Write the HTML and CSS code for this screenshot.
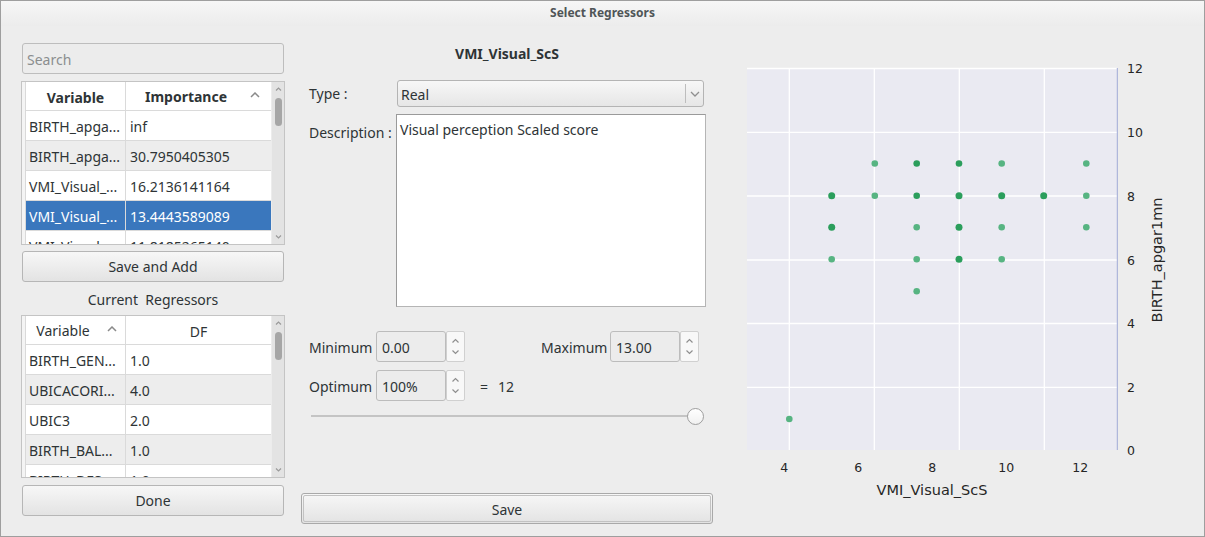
FILE: index.html
```html
<!DOCTYPE html>
<html>
<head>
<meta charset="utf-8">
<link rel="stylesheet" href="styles.css">
</head>
<body>
<div class="window">
  <div class="titlebar">Select Regressors</div>
  <div class="content">
    <div class="left">
      <div class="search">Search</div>
      <div class="tv tv1">
        <div class="vh"></div>
        <div class="grid">
          <div class="row hdr">
            <div class="c1 bold center">Variable</div>
            <div class="c2 hc2">
              <span class="bold htext">Importance</span>
              <svg class="caret" width="10" height="6" viewBox="0 0 10 6"><path d="M1 5 L5 1 L9 5" fill="none" stroke="#8a8a8a" stroke-width="1.5"/></svg>
            </div>
          </div>
          <div class="row"><div class="c1">BIRTH_apga...</div><div class="c2">inf</div></div>
          <div class="row alt"><div class="c1">BIRTH_apga...</div><div class="c2">30.7950405305</div></div>
          <div class="row"><div class="c1">VMI_Visual_...</div><div class="c2">16.2136141164</div></div>
          <div class="row sel"><div class="c1">VMI_Visual_...</div><div class="c2">13.4443589089</div></div>
          <div class="row"><div class="c1">VMI_Visual_...</div><div class="c2">11.8185265140</div></div>
        </div>
        <div class="sb">
          <svg width="9" height="6" viewBox="0 0 9 6"><path d="M2 4.5 L4.5 2 L7 4.5" fill="none" stroke="#9a9a9a" stroke-width="1.2"/></svg>
          <div class="thumb"></div>
          <div class="sb-fill"></div>
          <svg width="9" height="6" viewBox="0 0 9 6"><path d="M2 1.5 L4.5 4 L7 1.5" fill="none" stroke="#9a9a9a" stroke-width="1.2"/></svg>
        </div>
      </div>
      <div class="btn btn-add">Save and Add</div>
      <div class="cap">Current&nbsp; Regressors</div>
      <div class="tv tv2">
        <div class="vh"></div>
        <div class="grid">
          <div class="row hdr">
            <div class="c1 hc1">
              <span>Variable</span>
              <svg class="caret2" width="10" height="6" viewBox="0 0 10 6"><path d="M1 5 L5 1 L9 5" fill="none" stroke="#8a8a8a" stroke-width="1.5"/></svg>
            </div>
            <div class="c2 center">DF</div>
          </div>
          <div class="row"><div class="c1">BIRTH_GEN...</div><div class="c2">1.0</div></div>
          <div class="row alt"><div class="c1">UBICACORI...</div><div class="c2">4.0</div></div>
          <div class="row"><div class="c1">UBIC3</div><div class="c2">2.0</div></div>
          <div class="row alt"><div class="c1">BIRTH_BAL...</div><div class="c2">1.0</div></div>
          <div class="row"><div class="c1">BIRTH_DES...</div><div class="c2">1.0</div></div>
        </div>
        <div class="sb">
          <svg width="9" height="6" viewBox="0 0 9 6"><path d="M2 4.5 L4.5 2 L7 4.5" fill="none" stroke="#9a9a9a" stroke-width="1.2"/></svg>
          <div class="thumb"></div>
          <div class="sb-fill"></div>
          <svg width="9" height="6" viewBox="0 0 9 6"><path d="M2 1.5 L4.5 4 L7 1.5" fill="none" stroke="#9a9a9a" stroke-width="1.2"/></svg>
        </div>
      </div>
      <div class="btn btn-done">Done</div>
    </div>

    <div class="mid">
      <div class="vtitle">VMI_Visual_ScS</div>
      <div class="frow type-row">
        <div class="flabel">Type :</div>
        <div class="combo">
          <span class="combo-text">Real</span>
          <div class="combo-arrow">
            <svg width="10" height="6" viewBox="0 0 10 6"><path d="M1 1 L5 5 L9 1" fill="none" stroke="#8f8f8f" stroke-width="1.3"/></svg>
          </div>
        </div>
      </div>
      <div class="frow desc-row">
        <div class="flabel dlabel">Description :</div>
        <div class="textarea">Visual perception Scaled score</div>
      </div>
      <div class="frow mm-row">
        <div class="slabel">Minimum</div>
        <div class="spin">
          <div class="spin-field">0.00</div>
          <div class="spin-btns">
            <svg width="9" height="6" viewBox="0 0 9 6"><path d="M1.5 4.5 L4.5 1.5 L7.5 4.5" fill="none" stroke="#8f8f8f" stroke-width="1.2"/></svg>
            <svg width="9" height="6" viewBox="0 0 9 6"><path d="M1.5 1.5 L4.5 4.5 L7.5 1.5" fill="none" stroke="#8f8f8f" stroke-width="1.2"/></svg>
          </div>
        </div>
        <div class="slabel maxlabel">Maximum</div>
        <div class="spin">
          <div class="spin-field">13.00</div>
          <div class="spin-btns">
            <svg width="9" height="6" viewBox="0 0 9 6"><path d="M1.5 4.5 L4.5 1.5 L7.5 4.5" fill="none" stroke="#8f8f8f" stroke-width="1.2"/></svg>
            <svg width="9" height="6" viewBox="0 0 9 6"><path d="M1.5 1.5 L4.5 4.5 L7.5 1.5" fill="none" stroke="#8f8f8f" stroke-width="1.2"/></svg>
          </div>
        </div>
      </div>
      <div class="frow opt-row">
        <div class="slabel">Optimum</div>
        <div class="spin">
          <div class="spin-field">100%</div>
          <div class="spin-btns">
            <svg width="9" height="6" viewBox="0 0 9 6"><path d="M1.5 4.5 L4.5 1.5 L7.5 4.5" fill="none" stroke="#8f8f8f" stroke-width="1.2"/></svg>
            <svg width="9" height="6" viewBox="0 0 9 6"><path d="M1.5 1.5 L4.5 4.5 L7.5 1.5" fill="none" stroke="#8f8f8f" stroke-width="1.2"/></svg>
          </div>
        </div>
        <div class="eq">=</div>
        <div class="eqv">12</div>
      </div>
      <div class="slider">
        <div class="track"></div>
        <div class="handle"></div>
      </div>
      <div class="btn btn-save"><div class="btn-inner">Save</div></div>
    </div>

    <svg class="plot" width="474" height="487" viewBox="730 43 474 487">
      <rect x="747" y="68" width="370" height="382" fill="#eaeaf2"/>
      <g stroke="#ffffff" stroke-width="1.3">
        <line x1="747" y1="68.5" x2="1117" y2="68.5"/>
        <line x1="747" y1="132.3" x2="1117" y2="132.3"/>
        <line x1="747" y1="196" x2="1117" y2="196"/>
        <line x1="747" y1="260" x2="1117" y2="260"/>
        <line x1="747" y1="323.5" x2="1117" y2="323.5"/>
        <line x1="747" y1="387.3" x2="1117" y2="387.3"/>
        <line x1="789.3" y1="68" x2="789.3" y2="450"/>
        <line x1="874.3" y1="68" x2="874.3" y2="450"/>
        <line x1="959.3" y1="68" x2="959.3" y2="450"/>
        <line x1="1044.3" y1="68" x2="1044.3" y2="450"/>
      </g>
      <line x1="1117.3" y1="68" x2="1117.3" y2="450" stroke="#9fa9d6" stroke-width="1"/>
      <g fill="#57b482">
        <circle cx="874.8" cy="163.5" r="3.3"/>
        <circle cx="1001.7" cy="163.5" r="3.3"/>
        <circle cx="1086.3" cy="163.5" r="3.3"/>
        <circle cx="874.8" cy="195.7" r="3.3"/>
        <circle cx="1086.3" cy="195.7" r="3.3"/>
        <circle cx="916.7" cy="227.3" r="3.3"/>
        <circle cx="1001.7" cy="227.3" r="3.3"/>
        <circle cx="1086.3" cy="227.3" r="3.3"/>
        <circle cx="831.7" cy="259.3" r="3.3"/>
        <circle cx="916.7" cy="259.3" r="3.3"/>
        <circle cx="1001.7" cy="259.3" r="3.3"/>
        <circle cx="916.7" cy="291.3" r="3.3"/>
        <circle cx="789.3" cy="419" r="3.3"/>
      </g>
      <g fill="#2b9e5c">
        <circle cx="916.7" cy="163.5" r="3.3"/>
        <circle cx="959" cy="163.5" r="3.3"/>
        <circle cx="831.7" cy="195.7" r="3.5"/>
        <circle cx="916.7" cy="195.7" r="3.3"/>
        <circle cx="959" cy="195.7" r="3.5"/>
        <circle cx="1001.7" cy="195.7" r="3.5"/>
        <circle cx="1043.7" cy="195.7" r="3.5"/>
        <circle cx="831.7" cy="227.3" r="3.5"/>
        <circle cx="959" cy="227.3" r="3.5"/>
        <circle cx="959" cy="259.3" r="3.5"/>
      </g>
      <g class="tick" fill="#262626">
        <text x="1127" y="72.5">12</text>
        <text x="1127" y="136.5">10</text>
        <text x="1127" y="200.5">8</text>
        <text x="1127" y="264.5">6</text>
        <text x="1127" y="328">4</text>
        <text x="1127" y="391.5">2</text>
        <text x="1127" y="454.5">0</text>
      </g>
      <g class="tick" fill="#262626" text-anchor="middle">
        <text x="784.3" y="471.5">4</text>
        <text x="858.3" y="471.5">6</text>
        <text x="932.3" y="471.5">8</text>
        <text x="1006.3" y="471.5">10</text>
        <text x="1080.3" y="471.5">12</text>
      </g>
      <text class="alabel" x="932" y="495" text-anchor="middle" fill="#262626">VMI_Visual_ScS</text>
      <text class="alabel" x="1162" y="260" text-anchor="middle" fill="#262626" transform="rotate(-90 1162 260)">BIRTH_apgar1mn</text>
    </svg>
  </div>
</div>
</body>
</html>
```

FILE: styles.css
```css
* { box-sizing: border-box; }
html, body { margin: 0; padding: 0; }
body {
  width: 1205px;
  height: 537px;
  overflow: hidden;
  background: #ededed;
  font-family: "Noto Sans", "DejaVu Sans", sans-serif;
  font-size: 14px;
  color: #2e3436;
}
.window {
  width: 1205px;
  height: 537px;
  border: 1px solid #9e9e9e;
  background: #ededed;
  display: flex;
  flex-direction: column;
}
.titlebar {
  height: 25px;
  flex: none;
  background: linear-gradient(#f6f6f6, #ececec);
  text-align: center;
  font-weight: bold;
  font-size: 12px;
  line-height: 23px;
  color: #4f5557;
}
.content {
  flex: 1;
  display: flex;
  align-items: flex-start;
  padding: 17px 0 0 20px;
}
/* left column */
.left {
  width: 264px;
  flex: none;
  display: flex;
  flex-direction: column;
}
.search {
  margin: 0 1px 7px 1px;
  height: 31px;
  border: 1px solid #bdbdbd;
  border-radius: 3px;
  background: #ececec;
  color: #8b8e8f;
  padding-left: 4px;
  line-height: 31px;
}
.tv {
  display: flex;
  border: 1px solid #c4c4c4;
  background: #ffffff;
  overflow: hidden;
}
.tv1 { height: 164px; }
.tv2 { height: 163px; }
.vh {
  width: 4px;
  flex: none;
  background: #f4f4f4;
  border-right: 1px solid #d9d9d9;
}
.grid {
  width: 245px;
  flex: none;
  overflow: hidden;
}
.row {
  display: flex;
  height: 30px;
  border-bottom: 1px solid #dadada;
  background: #ffffff;
  white-space: nowrap;
}
.row.hdr { height: 29px; background: #ffffff; }
.row.alt { background: #ededed; }
.row.sel { background: #3a77bd; color: #ffffff; }
.c1 {
  width: 100px;
  flex: none;
  border-right: 1px solid #dadada;
  padding-left: 3px;
  line-height: 31px;
  overflow: hidden;
}
.c2 {
  flex: 1;
  padding-left: 4px;
  line-height: 31px;
  overflow: hidden;
}
.row.hdr .c1, .row.hdr .c2 { line-height: 31px; }
.bold { font-weight: bold; }
.center { text-align: center; padding-left: 0; }
.hc2 { display: flex; align-items: center; padding-left: 0; }
.htext { flex: 1; text-align: center; }
.caret { margin: 0 11px 2px 4px; flex: none; }
.hc1 { display: flex; align-items: center; justify-content: center; padding-left: 2px; }
.caret2 { margin: 0 0 2px 17px; }
.sb {
  flex: 1;
  background: #e3e3e3;
  border-left: 1px solid #ececec;
  display: flex;
  flex-direction: column;
  align-items: center;
  padding: 4px 0 4px;
}
.thumb {
  margin-top: 6px;
  width: 7px;
  height: 28px;
  border-radius: 4px;
  background: #a6a6a6;
}
.sb-fill { flex: 1; }
.btn {
  height: 31px;
  margin: 0 1px;
  border: 1px solid #b6b6b6;
  border-radius: 3px;
  background: linear-gradient(#f7f7f7, #e3e3e3);
  text-align: center;
  line-height: 30px;
}
.btn-add { margin-top: 6px; }
.cap {
  height: 33px;
  line-height: 35px;
  text-align: center;
}
.btn-done { margin-top: 7px; }
/* middle column */
.mid {
  width: 412px;
  flex: none;
  margin-left: 16px;
  display: flex;
  flex-direction: column;
}
.vtitle {
  height: 20px;
  line-height: 22px;
  text-align: center;
  font-weight: bold;
}
.frow { display: flex; align-items: center; padding-left: 8px; }
.type-row { margin-top: 17px; height: 27px; }
.flabel { width: 88px; flex: none; }
.combo {
  width: 307px;
  height: 27px;
  border: 1px solid #b4b4b4;
  border-radius: 3px;
  background: linear-gradient(#f7f7f7, #e6e6e6);
  display: flex;
  align-items: center;
}
.combo-text { flex: 1; padding-left: 3px; padding-top: 1px; }
.combo-arrow {
  width: 18px;
  height: 19px;
  border-left: 1px solid #bdbdbd;
  display: flex;
  align-items: center;
  justify-content: center;
}
.desc-row { margin-top: 7px; align-items: flex-start; }
.dlabel { width: 87px; padding-top: 9px; }
.textarea {
  width: 310px;
  height: 193px;
  background: #ffffff;
  border: 1px solid #b5b5b5;
  border-top-color: #9a9a9a;
  border-left-color: #9a9a9a;
  padding: 5px 0 0 3px;
}
.mm-row { margin-top: 24px; height: 31px; padding-top: 2px; }
.opt-row { margin-top: 8px; height: 31px; padding-top: 2px; }
.spin { align-self: flex-start; margin-top: -2px; }
.slabel { width: 67px; flex: none; }
.maxlabel { margin-left: 76px; width: 69px; }
.spin { display: flex; height: 31px; }
.spin-field {
  width: 70px;
  height: 31px;
  border: 1px solid #bcbcbc;
  border-radius: 3px;
  background: #ececec;
  line-height: 31px;
  padding-left: 5px;
}
.spin-btns {
  width: 19px;
  height: 31px;
  border: 1px solid #d0d0d0;
  border-radius: 2px;
  background: #f8f8f8;
  display: flex;
  flex-direction: column;
  align-items: center;
  justify-content: space-around;
  padding: 3px 0;
}
.eq { margin-left: 15px; }
.eqv { margin-left: 10px; }
.slider {
  margin-top: 5px;
  height: 20px;
  display: flex;
  align-items: center;
  padding-left: 10px;
}
.track {
  width: 383px;
  height: 2px;
  background: #c4c4c4;
}
.handle {
  width: 17px;
  height: 17px;
  border-radius: 50%;
  border: 1px solid #9e9e9e;
  background: linear-gradient(#ffffff, #f1f1f1);
  margin-left: -7px;
}
.btn-save {
  margin: 67px 0 0 0;
  width: 412px;
  padding: 1px;
  border-color: #a9a9a9;
}
.btn-inner {
  height: 27px;
  border: 1px solid #c2c2c2;
  border-radius: 2px;
  line-height: 28px;
}
/* plot */
.plot {
  flex: none;
  margin-left: 17px;
  display: block;
}
.tick { font-family: "DejaVu Sans", sans-serif; font-size: 12.5px; }
.alabel { font-family: "DejaVu Sans", sans-serif; font-size: 14.5px; }
```
